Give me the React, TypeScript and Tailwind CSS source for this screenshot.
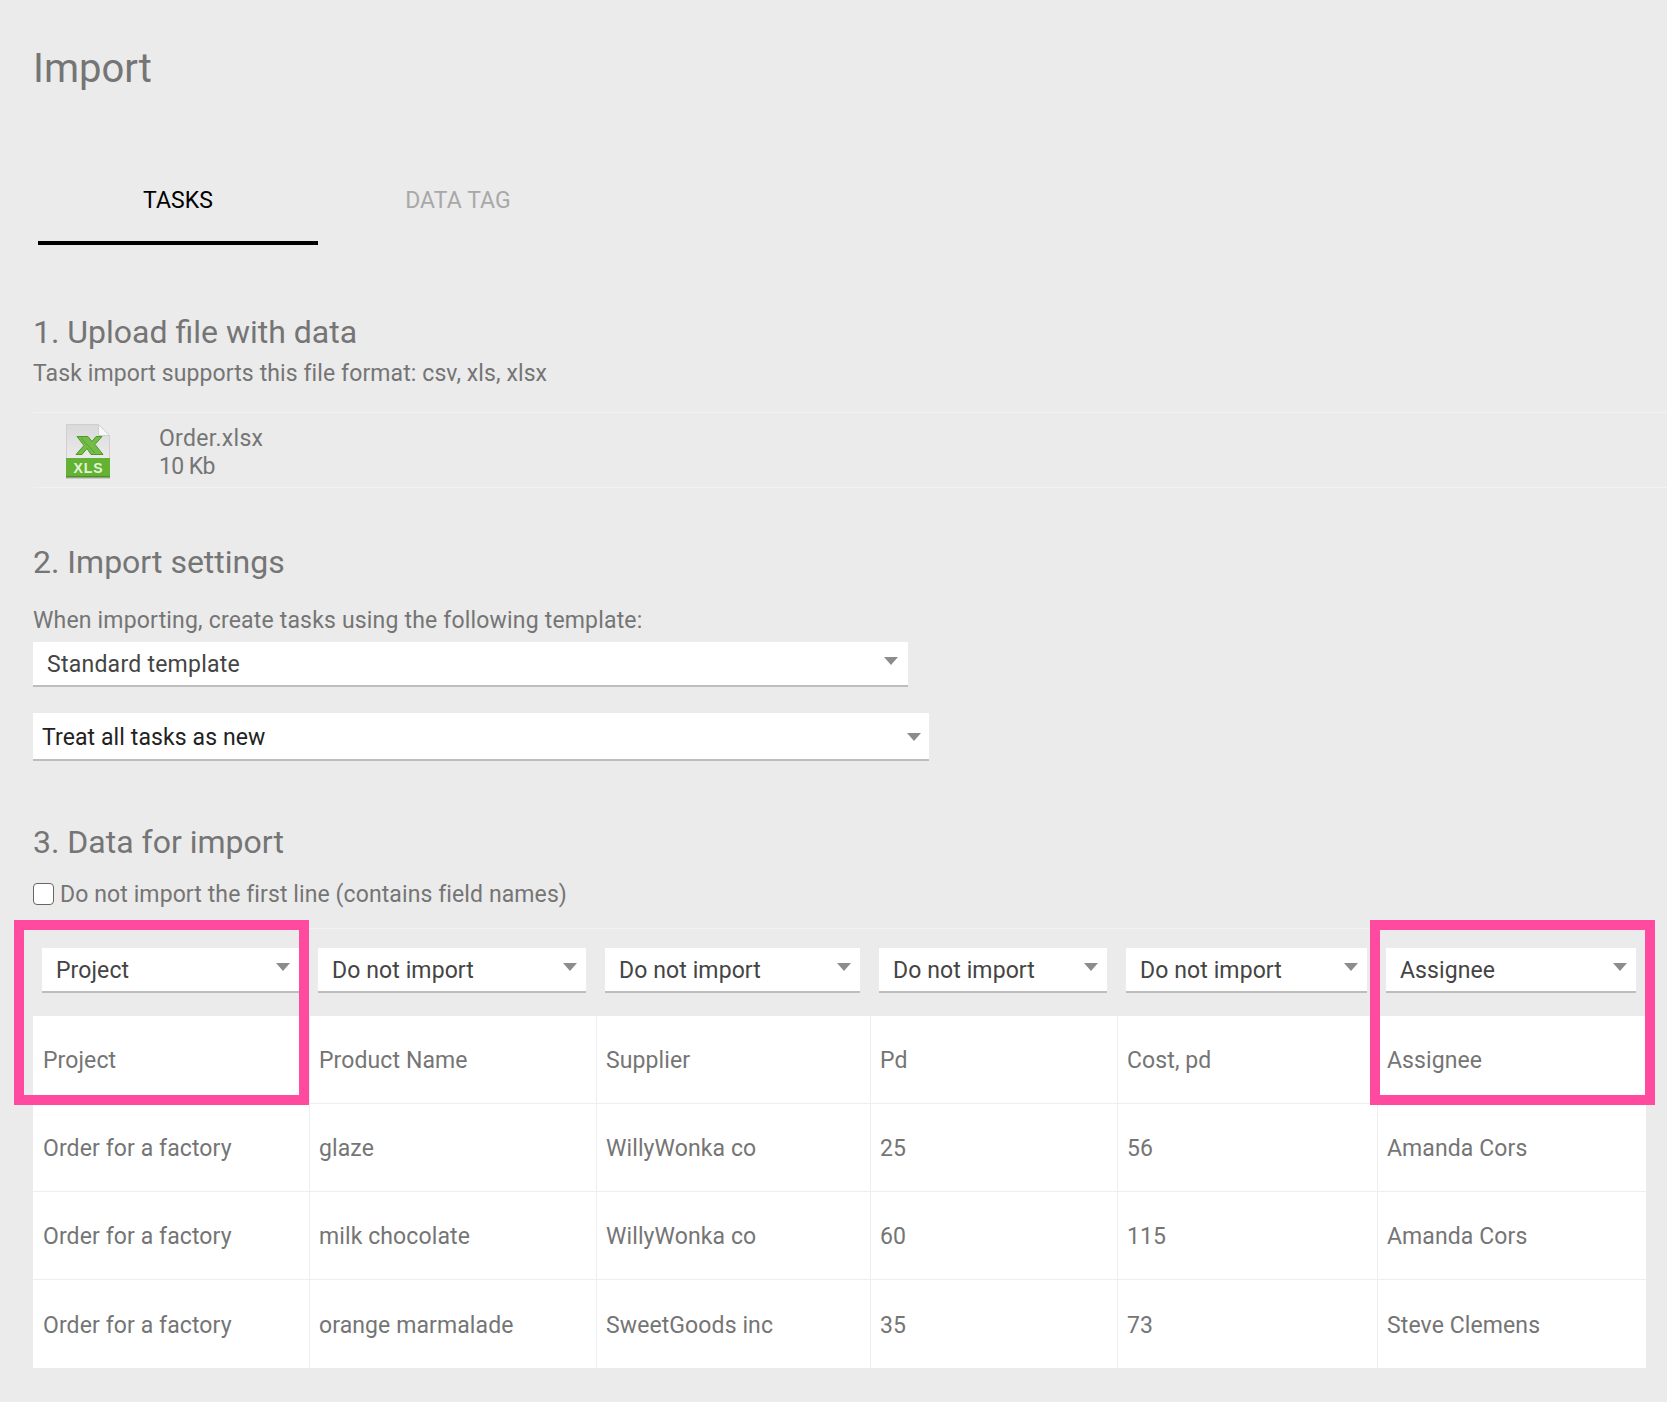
import React from 'react'

const columns = ['Project', 'Do not import', 'Do not import', 'Do not import', 'Do not import', 'Assignee']

const rows = [
  ['Project', 'Product Name', 'Supplier', 'Pd', 'Cost, pd', 'Assignee'],
  ['Order for a factory', 'glaze', 'WillyWonka co', '25', '56', 'Amanda Cors'],
  ['Order for a factory', 'milk chocolate', 'WillyWonka co', '60', '115', 'Amanda Cors'],
  ['Order for a factory', 'orange marmalade', 'SweetGoods inc', '35', '73', 'Steve Clemens'],
]

const Caret = ({ className }: { className: string }) => (
  <svg viewBox="0 0 14 8" className={`absolute w-[14px] h-[8px] ${className}`}>
    <path d="M0 0h14L7 8z" fill="#8c8c8c" />
  </svg>
)

const XlsIcon = () => (
  <svg viewBox="0 0 46 56" className="w-[46px] h-[56px] ml-[32px] mt-[1px] shrink-0">
    <defs>
      <linearGradient id="page" x1="0" y1="0" x2="0" y2="1">
        <stop offset="0" stopColor="#d9d9d9" />
        <stop offset="1" stopColor="#f4f4f4" />
      </linearGradient>
    </defs>
    <path d="M1 2h33l11 11v42H1z" fill="#adadad" opacity="0.55" transform="translate(0 1)" />
    <path d="M1.500 1.500h32l11 11V54h-43z" fill="url(#page)" stroke="#cfcfcf" />
    <path d="M33.500 1.500v11h11z" fill="#f8f8f8" stroke="#d0d0d0" />
    <path
      d="M12 13.500h11l4 5 4-5h6l-7 8 8 10H26l-4-6-5 6h-6l8-9z"
      fill="#74bb47"
      stroke="#4a9a2a"
      strokeWidth="1"
    />
    <path d="M16 15l14 15" stroke="#4a9a2a" strokeWidth="0.8" fill="none" />
    <rect x="1" y="35" width="44" height="19" fill="#64b233" />
    <rect x="1" y="53" width="44" height="1.500" fill="#4a8f25" />
    <text
      x="23.500"
      y="50"
      textAnchor="middle"
      fontSize="14"
      fontWeight="700"
      letterSpacing="1"
      fill="#e3f2d6"
      fontFamily="'Liberation Sans', sans-serif"
    >
      XLS
    </text>
  </svg>
)

export default function App() {
  return (
    <div className="min-h-[1402px] bg-[#ebebeb] pt-[45px] pl-[33px] text-[#757575] font-['Roboto',sans-serif] text-[23px] tracking-[0.1px]">
      <h1 className="text-[40px] leading-[48px] tracking-normal">Import</h1>

      <div className="flex ml-[5px] mt-[93px] text-center text-[23px] leading-[28px]">
        <div className="w-[280px] h-[59px] pt-[1px] border-b-4 border-black text-black">TASKS</div>
        <div className="w-[280px] h-[59px] pt-[1px] text-[#a8a8a8]">DATA TAG</div>
      </div>

      <h2 className="mt-[67px] text-[32px] leading-[40px] tracking-normal">1. Upload file with data</h2>
      <p className="mt-[7px] leading-[30px]">Task import supports this file format: csv, xls, xlsx</p>

      <div className="flex items-center h-[76px] mt-[23px] border-y border-[#f1f1f1]">
        <XlsIcon />
        <div className="ml-[48px] pt-[6px] leading-[28px] tracking-[0.3px]">
          <div>Order.xlsx</div>
          <div className="tracking-[-0.6px]">10 Kb</div>
        </div>
      </div>

      <h2 className="mt-[54px] text-[32px] leading-[40px] tracking-normal">2. Import settings</h2>
      <p className="mt-[24px] leading-[30px] tracking-[0.18px]">When importing, create tasks using the following template:</p>
      <div className="relative flex items-center w-[875px] h-[45px] mt-[6px] pl-[14px] pt-[4px] bg-white border-b-2 border-[#bdbdbd] text-[#444] tracking-[0.25px]">
        Standard template
        <Caret className="right-[10px] top-[15px]" />
      </div>
      <div className="relative flex items-center w-[896px] h-[48px] mt-[26px] pl-[9px] pt-[4px] bg-white border-b-2 border-[#bdbdbd] text-[#222]">
        Treat all tasks as new
        <Caret className="right-[8px] top-[20px]" />
      </div>

      <h2 className="mt-[61px] text-[32px] leading-[40px] tracking-normal">3. Data for import</h2>
      <label className="flex items-center mt-[16px] leading-[30px]">
        <span className="w-[21px] h-[22px] mr-[6px] bg-white border border-[#666] rounded-[4px]" />
        <span className="pt-[2px]">Do not import the first line (contains field names)</span>
      </label>

      <div className="relative w-[1613px] mt-[18px]">
        <div className="grid grid-cols-[276px_287px_274px_247px_260px_269px] border-t border-[#f1f1f1] pt-[19px] pb-[23px]">
          {columns.map((name, i) => (
            <div key={i} className="pl-[9px] pr-[10px]">
              <div className="relative flex items-center h-[45px] pl-[14px] pt-[4px] bg-white border-b-2 border-[#bdbdbd] text-[#444]">
                {name}
                <Caret className="right-[9px] top-[15px]" />
              </div>
            </div>
          ))}
        </div>

        <div className="bg-white">
          {rows.map((row, i) => (
            <div key={i} className="grid grid-cols-[276px_287px_274px_247px_260px_269px] h-[88px] border-b border-[#eeeeee] last:border-b-0">
              {row.map((cell, j) => (
                <div key={j} className="flex items-center pl-[9px] first:pl-[10px] pt-[4px] border-l border-[#eeeeee] first:border-l-0">
                  {cell}
                </div>
              ))}
            </div>
          ))}
        </div>

        <div className="absolute left-[-19px] top-[-8px] w-[295px] h-[185px] border-[10px] border-[#ff4aa0] pointer-events-none" />
        <div className="absolute left-[1337px] top-[-8px] w-[285px] h-[185px] border-[10px] border-[#ff4aa0] pointer-events-none" />
      </div>
    </div>
  )
}
